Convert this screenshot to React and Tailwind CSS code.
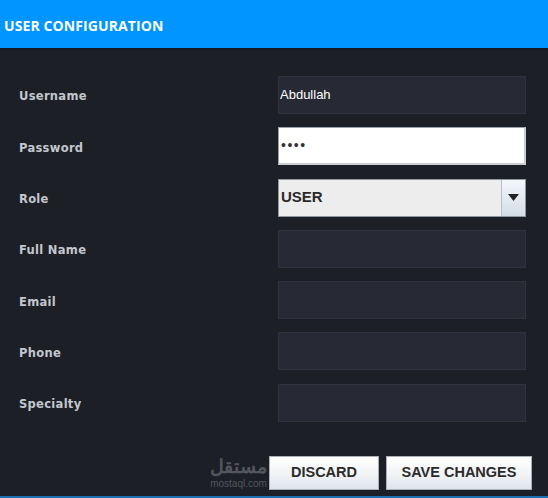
import React from "react";

const fields = [
  { label: "Username", kind: "dark", value: "Abdullah" },
  { label: "Password", kind: "password", value: "••••" },
  { label: "Role", kind: "select", value: "USER" },
  { label: "Full Name", kind: "dark", value: "" },
  { label: "Email", kind: "dark", value: "" },
  { label: "Phone", kind: "dark", value: "" },
  { label: "Specialty", kind: "dark", value: "" },
];

function Field({ kind, value }) {
  if (kind === "password") {
    return (
      <div className="w-[248px] h-[38px] bg-white border border-[#9aa3ad] border-r-2 border-b-2 border-r-[#c9ced4] border-b-[#c9ced4] flex items-center px-[2px] text-[14px] text-[#333] tracking-[1.5px] font-['Liberation_Sans',sans-serif]">
        {value}
      </div>
    );
  }
  if (kind === "select") {
    return (
      <div className="w-[248px] h-[38px] flex border border-[#8e98a3] bg-[#ededed]">
        <div className="flex-1 flex items-center px-[2px] text-[15px] font-bold text-[#2a2a2a] font-['Liberation_Sans',sans-serif]">
          {value}
        </div>
        <div className="w-[24px] border-l border-[#b7c0c9] bg-gradient-to-b from-[#f4f7fa] to-[#d3dde8] flex items-center justify-center">
          <svg width="11" height="7" viewBox="0 0 11 7">
            <path d="M0 0 H11 L5.5 7 Z" fill="#222" />
          </svg>
        </div>
      </div>
    );
  }
  return (
    <div className="w-[248px] h-[38px] bg-[#272a34] border border-[#30333d] flex items-center px-[1px] text-[13px] text-white font-['Liberation_Sans',sans-serif]">
      {value}
    </div>
  );
}

function Button({ children, width }) {
  return (
    <button
      className={`${width} h-[34px] bg-gradient-to-b from-white via-[#f3f4f6] to-[#dfe5ec] border border-[#a9b0b8] text-[14.5px] font-bold text-[#2b2b2b] font-['Liberation_Sans',sans-serif] flex items-center justify-center`}
    >
      {children}
    </button>
  );
}

export default function App() {
  return (
    <div className="w-[548px] h-[498px] bg-[#1c1f26] flex flex-col overflow-hidden font-['DejaVu_Sans',sans-serif]">
      {/* Header */}
      <div className="h-[48px] bg-[#0095ff] flex items-center pl-[4px] pt-[3px] shrink-0">
        <h1 className="text-white text-[14px] font-bold font-['Open_Sans',sans-serif] tracking-[0.1px]">
          USER CONFIGURATION
        </h1>
      </div>
      <div className="h-[2px] bg-[#15171c] shrink-0"></div>

      {/* Form */}
      <div className="flex flex-col gap-[13.3px] pt-[26px]">
        {fields.map((f) => (
          <div key={f.label} className="flex items-center h-[38px]">
            <div className="w-[278px] pl-[19px] pt-[4px] text-[11.5px] font-bold text-[#c3c7ce] tracking-[0.3px]">
              {f.label}
            </div>
            <Field kind={f.kind} value={f.value} />
          </div>
        ))}
      </div>

      {/* Footer buttons */}
      <div className="flex-1 flex items-end justify-end gap-[7px] pr-[16px] pb-[6px] relative">
        <div className="absolute left-[210px] bottom-[7px] flex flex-col items-center gap-[3px] text-[#6b6e75] opacity-70">
          <span className="text-[19px] leading-[20px] font-bold font-['Noto_Sans',sans-serif]">مستقل</span>
          <span className="text-[10px] leading-[10px] font-['Liberation_Sans',sans-serif]">mostaql.com</span>
        </div>
        <Button width="w-[110px]">DISCARD</Button>
        <Button width="w-[146px]">SAVE CHANGES</Button>
      </div>
      <div className="h-[2px] bg-[#1b6fb3] shrink-0"></div>
    </div>
  );
}
